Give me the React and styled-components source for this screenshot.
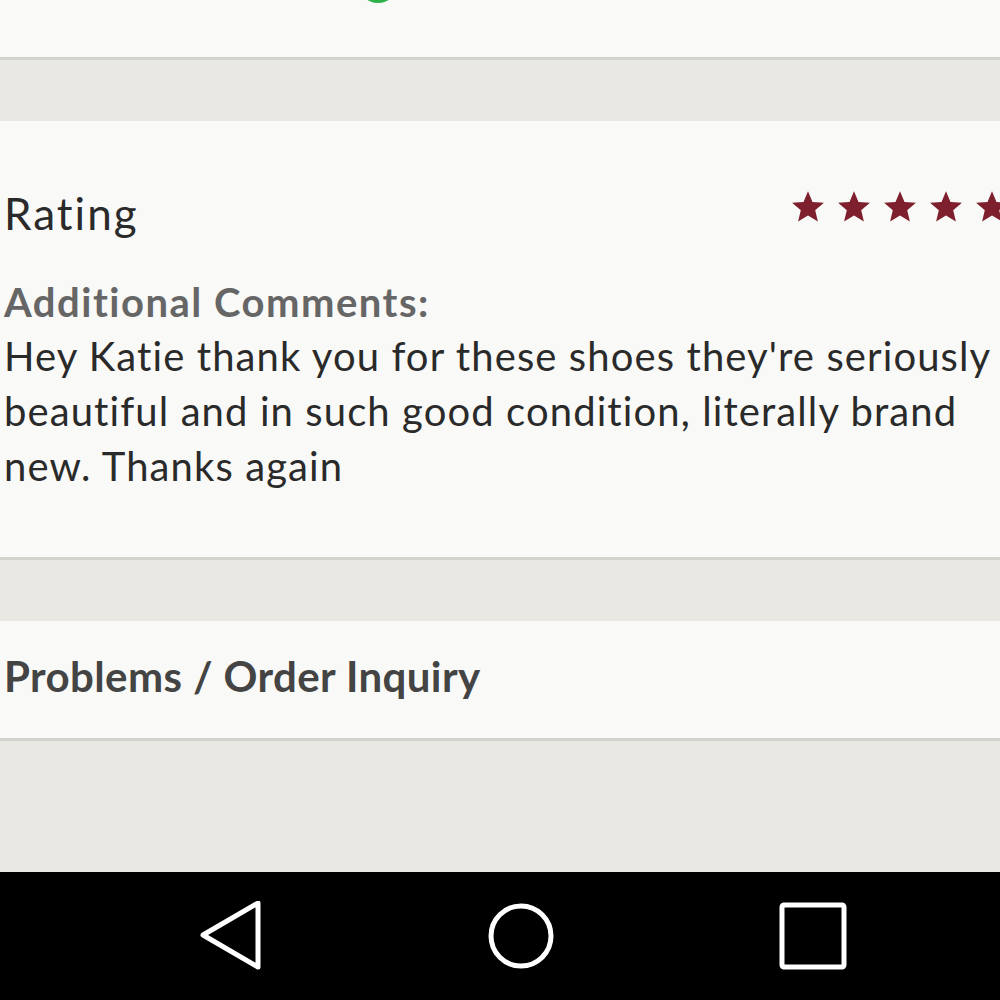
import React from "react";
import styled, { createGlobalStyle } from "styled-components";

const GlobalStyle = createGlobalStyle`
  * { box-sizing: border-box; }
  body {
    margin: 0;
    background: #e9e8e3;
    font-family: Lato, "Open Sans", sans-serif;
  }
`;

const Page = styled.div`
  width: 1000px;
  height: 1000px;
  display: flex;
  flex-direction: column;
  overflow: hidden;
  background: #e9e8e3;
`;

const Card = styled.section`
  background: #f9f9f7;
  border-bottom: 3px solid #d3d3ce;
  height: ${(p) => p.h}px;
  flex-shrink: 0;
  overflow: hidden;
  padding: ${(p) => p.pad || "0 0 0 4px"};
`;

const Gap = styled.div`
  height: ${(p) => p.h}px;
  flex-shrink: 0;
`;

const TopRow = styled.div`
  display: flex;
  justify-content: flex-start;
`;

const StatusDot = styled.div`
  width: 40px;
  height: 40px;
  border-radius: 50%;
  background: #2fb14a;
  margin: -37px 0 0 354px;
`;

const RatingRow = styled.div`
  display: flex;
  justify-content: space-between;
  align-items: center;
  margin-top: 66px;
  height: 52px;
`;

const Label = styled.h2`
  margin: 0;
  font-size: 44px;
  font-weight: 400;
  letter-spacing: 2px;
  color: #2a2a2a;
`;

const Stars = styled.div`
  display: flex;
  gap: 10px;
  margin-right: -10px;
  margin-top: -12px;
`;

const Heading = styled.h3`
  margin: 40px 0 0;
  font-size: 40px;
  font-weight: 700;
  letter-spacing: 1.5px;
  color: #666;
  line-height: 46px;
`;

const Body = styled.p`
  margin: 4px 0 0;
  font-size: 40px;
  letter-spacing: 1.1px;
  line-height: 55px;
  color: #2a2a2a;
`;

const Line = styled.span`
  display: block;
  white-space: nowrap;
`;

const Inquiry = styled.h3`
  margin: 30px 0 0;
  font-size: 42px;
  font-weight: 700;
  letter-spacing: 0.4px;
  color: #444;
`;

const NavBar = styled.nav`
  height: 128px;
  flex-shrink: 0;
  background: #000;
  display: flex;
  align-items: center;
  justify-content: space-between;
  padding: 0 152px 0 198px;
`;

const Star = () => (
  <svg width="36" height="36" viewBox="0 0 24 24">
    <polygon
      points="12,1.5 15,8.6 22.6,9.2 16.8,14.2 18.6,21.7 12,17.6 5.4,21.7 7.2,14.2 1.4,9.2 9,8.6"
      fill="#7d1f2c"
    />
  </svg>
);

export default function App() {
  return (
    <>
      <GlobalStyle />
      <Page>
        <Card h={60}>
          <TopRow>
            <StatusDot />
          </TopRow>
        </Card>
        <Gap h={61} />
        <Card h={439}>
          <RatingRow>
            <Label>Rating</Label>
            <Stars>
              {[0, 1, 2, 3, 4].map((i) => (
                <Star key={i} />
              ))}
            </Stars>
          </RatingRow>
          <Heading>Additional Comments:</Heading>
          <Body>
            <Line>Hey Katie thank you for these shoes they're seriously</Line>
            <Line>beautiful and in such good condition, literally brand</Line>
            <Line>new. Thanks again</Line>
          </Body>
        </Card>
        <Gap h={61} />
        <Card h={120}>
          <Inquiry>Problems / Order Inquiry</Inquiry>
        </Card>
        <Gap h={131} />
        <NavBar>
          <svg width="66" height="70" viewBox="0 0 66 70">
            <polygon
              points="5,34 60,2 60,66"
              fill="none"
              stroke="#fff"
              strokeWidth="5"
              strokeLinejoin="round"
            />
          </svg>
          <svg width="70" height="70" viewBox="0 0 70 70">
            <circle cx="35" cy="35" r="30" fill="none" stroke="#fff" strokeWidth="5" />
          </svg>
          <svg width="70" height="70" viewBox="0 0 70 70">
            <rect x="4" y="4" width="62" height="62" rx="2" fill="none" stroke="#fff" strokeWidth="5" />
          </svg>
        </NavBar>
      </Page>
    </>
  );
}
